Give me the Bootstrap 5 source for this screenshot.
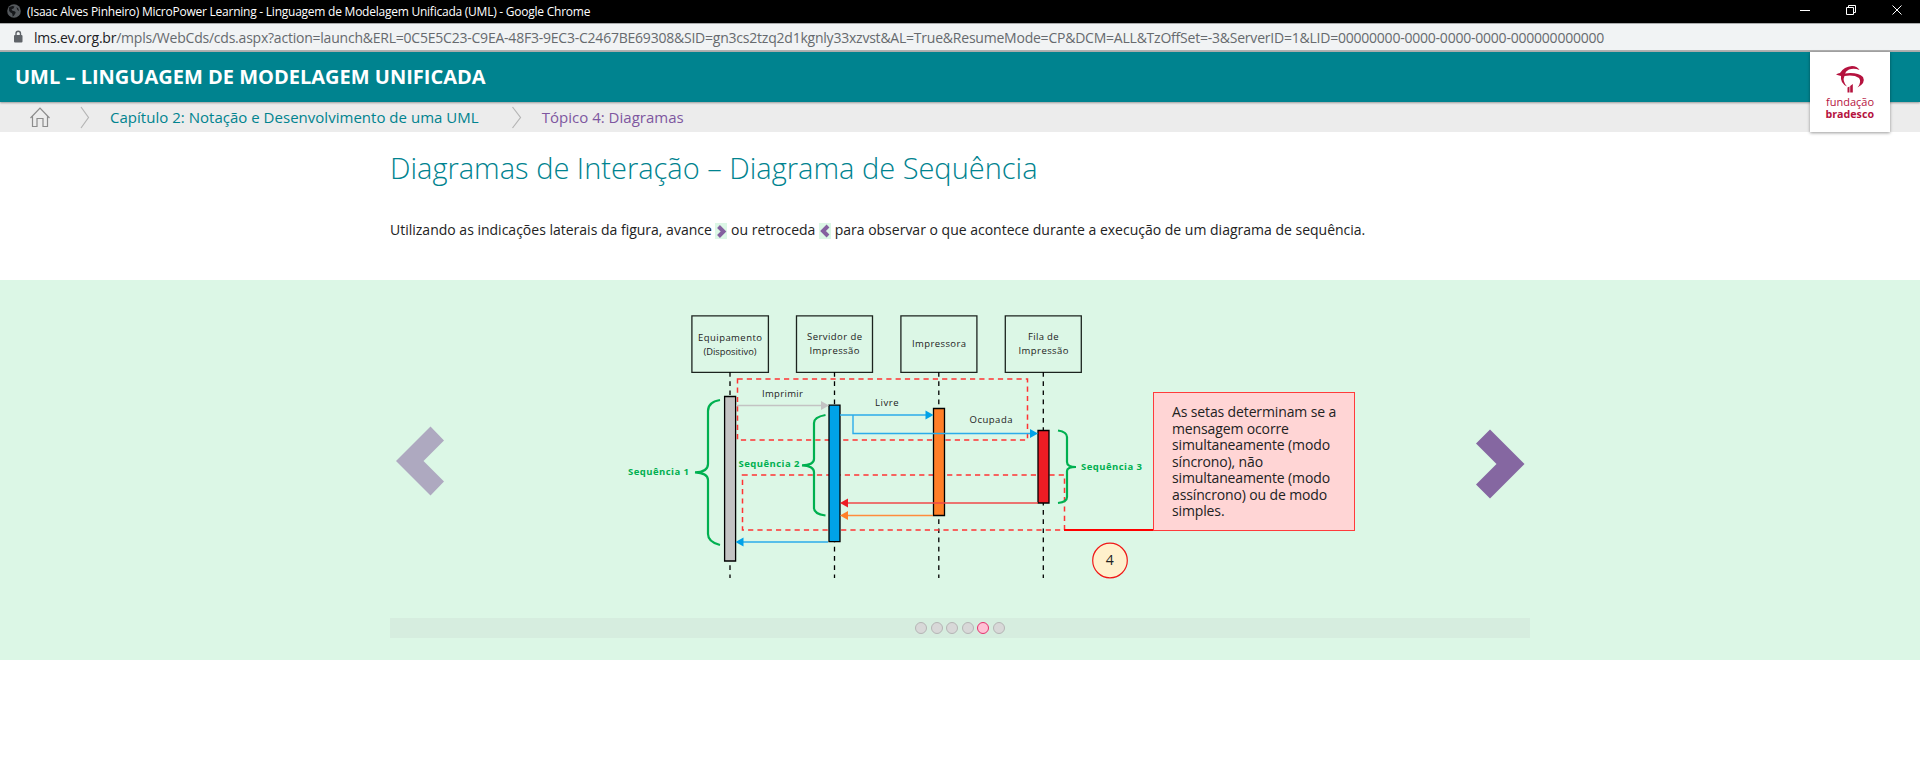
<!DOCTYPE html>
<html lang="pt-br">
<head>
<meta charset="utf-8">
<title>UML – Linguagem de Modelagem Unificada</title>
<link rel="stylesheet" href="https://cdn.jsdelivr.net/npm/bootstrap@5.3.0/dist/css/bootstrap.min.css">
<style>
body{font-family:"Open Sans","Noto Sans",sans-serif;color:#222;background:#fff;overflow:hidden}
.win-title{height:24px;background:#000;color:#fff;border-bottom:1px solid #a9abac;font-size:12px;line-height:17px;padding-top:3px}
.win-icon{margin:1px 6px 0 7px}
.caption-text{letter-spacing:-.24px}
.url-bar{height:28px;background:#f1f3f4;border-bottom:2px solid #b0b0b0;font-size:14px;letter-spacing:-.223px;color:#666a6e;padding-left:12px}
.url-bar svg{margin-right:10px}
.url-bar b{font-weight:400;color:#202124}
.course-bar{height:50px;background:#00838f;color:#fff;padding-left:15px;box-shadow:0 1px 2px rgba(0,0,0,.35);z-index:2}
.course-bar h1{font-size:20px;font-weight:700;line-height:50px}
.logo-box{width:80px;height:80px;top:0;right:30px;box-shadow:0 1px 3px rgba(0,0,0,.4)}
.crumbs{height:30px;background:#ececec;font-size:15px;letter-spacing:.02px;line-height:30px;color:#00838f}
.topic{color:#7e57a0}
.lesson{width:1140px;margin:0 auto}
.lesson h2{font-size:29px;font-weight:300;color:#00838f;line-height:36px;padding-top:18px}
.lesson p{font-size:14px;line-height:20px;margin-top:34px;margin-bottom:0}
.intro{height:148px}
.chev{width:12px;height:16px;background:#dcf7e6;vertical-align:-4px}
.stage{height:380px;background:#dcf7e6}
.stage-in{height:338px}
.callout{left:763px;top:112px;width:202px;height:139px;background:#ffd5d5;border:1.5px solid #ff3b3b;padding:11px 0 0 18px;font-size:14px;letter-spacing:-.13px;line-height:16.5px}
.pager{height:20px;background:#d6eddf;gap:3.6px}
.pager i{width:12px;height:12px;border-radius:50%;background:#d8d8d8;border:1px solid #b5b5b5}
.pager i.on{background:#ffc0d4;border-color:#e5316e}
</style>
</head>
<body>
<div class="win-title d-flex">
  <svg class="win-icon flex-shrink-0" width="14" height="14" viewBox="0 0 14 14"><circle cx="7" cy="7" r="6.800" fill="#54585c"/><path d="M2 3.500Q5 1 7.500 2.500Q7 5 4.500 5.200Q5 7 7.500 7.300Q9.500 8 8 10Q7 12 5.500 12.500Q6 9 3.500 8.500Q1.500 7 2 3.500ZM9.500 3Q12 4.500 12 7Q10 6.500 9.500 3Z" fill="#15171a"/></svg>
  <span class="caption-text">(Isaac Alves Pinheiro) MicroPower Learning - Linguagem de Modelagem Unificada (UML) - Google Chrome</span>
  <svg class="ms-auto" width="120" height="20" viewBox="1800 3 120 20" fill="none" stroke="#fff" stroke-width="1"><path d="M1800 10.500h10M1846.500 7.500h7v7h-7zM1848.500 7.500v-2h7v7h-2M1892.500 5.500l9 9M1901.500 5.500l-9 9"/></svg>
</div>
<div class="url-bar d-flex align-items-center">
  <svg class="flex-shrink-0" width="12" height="14" viewBox="0 0 12 14"><rect x="2" y="5" width="8.500" height="7.500" rx="1" fill="#5f6368"/><path d="M4 5V3.500a2.200 2.200 0 0 1 4.500 0V5" fill="none" stroke="#5f6368" stroke-width="1.400"/></svg>
  <span class="text-nowrap"><b>lms.ev.org.br</b>/mpls/WebCds/cds.aspx?action=launch&amp;ERL=0C5E5C23-C9EA-48F3-9EC3-C2467BE69308&amp;SID=gn3cs2tzq2d1kgnly33xzvst&amp;AL=True&amp;ResumeMode=CP&amp;DCM=ALL&amp;TzOffSet=-3&amp;ServerID=1&amp;LID=00000000-0000-0000-0000-000000000000</span>
</div>
<header class="course-bar position-relative d-flex">
  <h1 class="m-0">UML – LINGUAGEM DE MODELAGEM UNIFICADA</h1>
  <div class="logo-box position-absolute bg-white">
    <svg width="80" height="80" viewBox="1810 52 80 80" fill="#b5123e">
      <path d="M1840 73Q1844 66.500 1852 66Q1857 66 1859.500 70Q1854 67.600 1849 69.500Q1846 71 1845 73.400Q1858 72 1863 77Q1866 83 1857.500 87.500Q1862 82 1859 78Q1854 74.500 1844.500 76Q1842 81 1847 86.500Q1840 83 1841 76Q1838 75 1836 74.500Q1838 73 1840 73Z"/>
      <path d="M1847.500 87.500l2-1v6h-2zM1850.200 86l2.600-2v8.500h-2.600z"/>
      <text x="1826" y="106" font-size="11.500" textLength="48" lengthAdjust="spacingAndGlyphs">fundação</text>
      <text x="1825.500" y="117.700" font-size="11" font-weight="700" textLength="48.500" lengthAdjust="spacingAndGlyphs">bradesco</text>
    </svg>
  </div>
</header>
<nav class="crumbs d-flex">
  <svg width="110" height="30" viewBox="0 102 110 30" fill="none" stroke="#8c8c8c" stroke-width="1.200"><path d="M30.500 118L40 108l9.500 10M32.500 116.500v10h4.500v-8h6v8h4.500v-10"/><path d="M81 107l7.500 10.500L81 128" stroke="#b5b5b5"/></svg>
  <span>Capítulo 2: Notação e Desenvolvimento de uma UML</span>
  <svg width="63" height="30" viewBox="479 102 63 30" fill="none" stroke="#b5b5b5" stroke-width="1.200"><path d="M512.500 107l8 10.500-8 10.500"/></svg>
  <span class="topic">Tópico 4: Diagramas</span>
</nav>
<section class="intro">
  <div class="lesson">
    <h2 class="m-0">Diagramas de Interação – Diagrama de Sequência</h2>
    <p>Utilizando as indicações laterais da figura, avance <svg class="chev" viewBox="0 0 12 16"><path d="M3.500 3.500l5 5-5 5" fill="none" stroke="#8560a0" stroke-width="4"/></svg> ou retroceda <svg class="chev" viewBox="0 0 12 16"><path d="M9 3L4 8l5 5" fill="none" stroke="#8560a0" stroke-width="4"/></svg> para observar o que acontece durante a execução de um diagrama de sequência.</p>
  </div>
</section>
<section class="stage">
  <div class="lesson">
    <div class="stage-in position-relative">
      <svg class="d-block" width="1140" height="338" viewBox="390 280 1140 338" font-size="9.500" fill="#222">
        <path d="M430.500 426.500l13.500 14-20.500 20.500 20.500 20.500-13.500 14L396 461z" fill="#aea9c0"/>
        <path d="M1490 429.500l34.500 34.500-34.500 34.500-14-14 20.500-20.500-20.500-20.500z" fill="#8567a1"/>
        <g fill="none" stroke="#000" stroke-width="1.300">
          <path d="M691.900 315.800h76.500v56.500h-76.500zM796.500 315.800h76v56.500h-76zM900.900 315.800h76v56.500h-76zM1005.300 315.800h76v56.500h-76z" stroke="#1c241f"/>
          <path d="M730 372V578M834.500 372V578M938.800 372V578M1043.300 372V578" stroke-dasharray="4.700 4.500"/>
        </g>
        <g fill="none" stroke="#f33" stroke-width="1.500" stroke-dasharray="5.200 4.100">
          <path d="M737.500 379H1027.500V440H737.500z"/><path d="M742.500 475H1064.500V530H742.500z"/>
        </g>
        <g stroke="#000" stroke-width="1.300">
          <path d="M724.600 396.500h11v164.500h-11z" fill="#c3c3c3"/><path d="M829 405.200h11v136.500h-11z" fill="#00a2e8"/>
          <path d="M933.500 408.500h11v107h-11z" fill="#ff7f27"/><path d="M1038 430.500h11v72.500h-11z" fill="#ed1c24"/>
        </g>
        <g fill="none" stroke-width="1.400">
          <path d="M736 405.500h86" stroke="#c3c3c3"/>
          <path d="M840 415h87M853 415v18.500h178M828 542h-86" stroke="#2bacea"/>
          <path d="M1038 503H847" stroke="#f04848"/><path d="M933 515.500H847" stroke="#ff8c3c"/>
        </g>
        <path d="M821 401l8 4.500-8 4.500z" fill="#c3c3c3"/>
        <path d="M925.500 410.500l8 4.500-8 4.500zM1030 429l8 4.500-8 4.500zM743.500 537.500l-8 4.500 8 4.500z" fill="#00a2e8"/>
        <path d="M848 498.500l-8 4.500 8 4.500z" fill="#ed1c24"/><path d="M848 511l-8 4.500 8 4.500z" fill="#ff7f27"/>
        <g fill="none" stroke="#00b050" stroke-width="2.200">
          <path d="M720 400Q708 402 708 411V464Q708 472 695 472.300Q708 473 708 480V534Q708 542 720 545"/>
          <path d="M825.500 415Q814 417 814 423V459Q814 465 802 465.300Q814 466 814 472V508Q814 514 825.500 515.500"/>
          <path d="M1058 430.500Q1067 432 1067 437V462Q1067 467 1076 467Q1067 467 1067 471V497Q1067 502 1058 503"/>
        </g>
        <path d="M1064 530h93" stroke="#f00" stroke-width="2"/>
        <circle cx="1110" cy="560.500" r="17.300" fill="#fff0cc" stroke="#f01818" stroke-width="1.200"/>
        <text x="1105.800" y="565" font-size="14">4</text>
        <text x="698" y="341" textLength="64">Equipamento</text><text x="703.500" y="354.700" textLength="53" lengthAdjust="spacingAndGlyphs">(Dispositivo)</text>
        <text x="807" y="340" textLength="55">Servidor de</text><text x="809.500" y="354.300" textLength="50">Impressão</text>
        <text x="912" y="347" textLength="54">Impressora</text>
        <text x="1028" y="340" textLength="30.500">Fila de</text><text x="1018.500" y="354.300" textLength="50">Impressão</text>
        <text x="762" y="397" textLength="41">Imprimir</text><text x="875" y="406" textLength="23.500">Livre</text><text x="969.500" y="423" textLength="43">Ocupada</text>
        <g fill="#00b050" font-weight="700"><text x="628" y="475" textLength="61">Sequência 1</text><text x="738.500" y="467" textLength="61">Sequência 2</text><text x="1081" y="470" textLength="61">Sequência 3</text></g>
      </svg>
      <div class="callout position-absolute">As setas determinam se a<br>mensagem ocorre<br>simultaneamente (modo<br>síncrono), não<br>simultaneamente (modo<br>assíncrono) ou de modo<br>simples.</div>
    </div>
    <div class="pager d-flex justify-content-center align-items-center"><i></i><i></i><i></i><i></i><i class="on"></i><i></i></div>
  </div>
</section>
<script src="https://cdn.jsdelivr.net/npm/bootstrap@5.3.0/dist/js/bootstrap.bundle.min.js"></script>
</body>
</html>
